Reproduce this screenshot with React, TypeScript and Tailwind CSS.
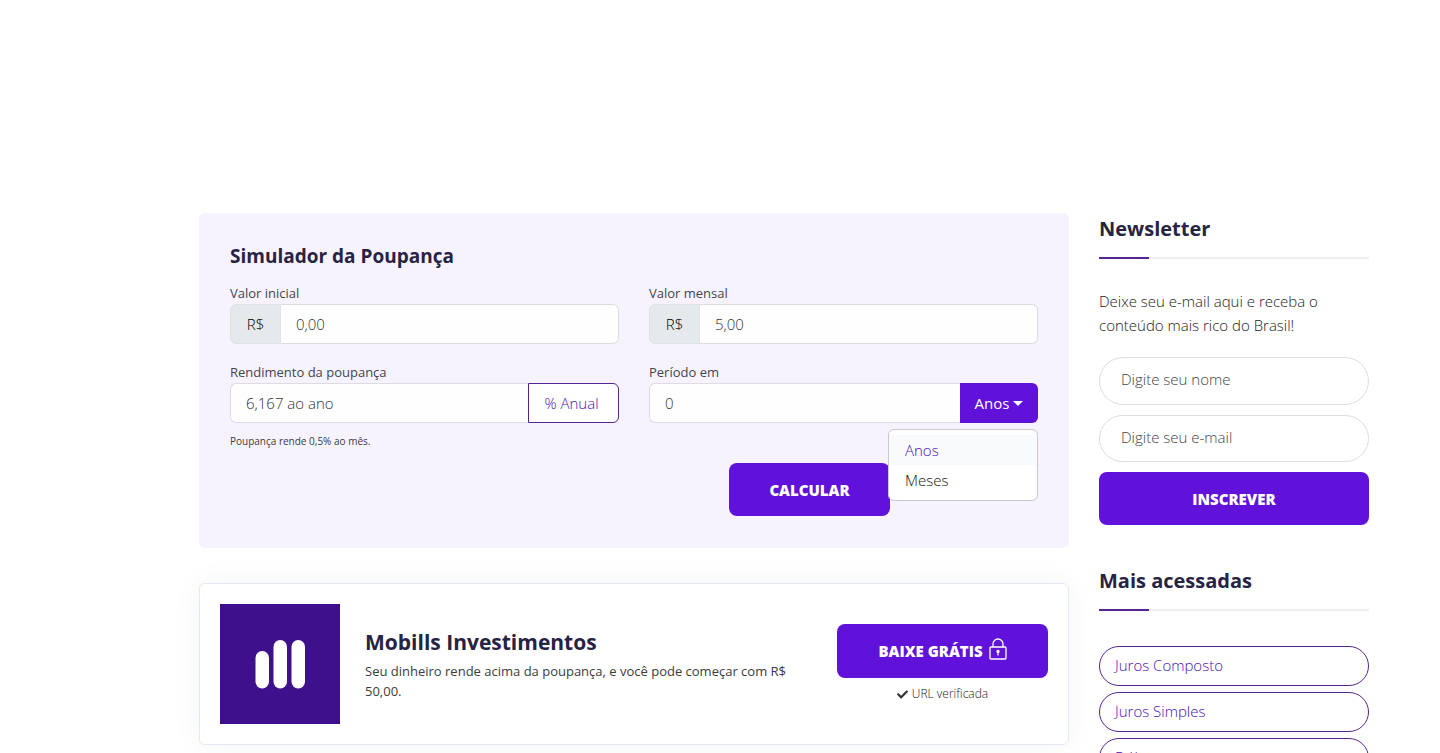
import { useState } from "react";

const periodos = ["Anos", "Meses"];

const maisAcessadas = [
  { nome: "Juros Composto", href: "#juros-composto" },
  { nome: "Juros Simples", href: "#juros-simples" },
  { nome: "Dólar", href: "#dolar" },
];

const labelClass = "block text-[13px] leading-[21px] text-[#45434f]";

const inputClass =
  "h-10 w-full min-w-0 border border-[#dcdce2] bg-[#fefefe] px-[15px] text-[15px] font-light text-[#333] placeholder:text-[#333] outline-none";

const newsletterInputClass =
  "rounded-full border border-[#dedee0] px-[21px] pb-1 text-[15px] font-light outline-none placeholder:text-[#444]";

const primaryButtonClass =
  "h-[53px] rounded-lg bg-[#6012db] pt-[2px] text-[15px] font-extrabold text-white";

function TituloSidebar({ children }: { children: string }) {
  return (
    <div className="border-b-2 border-[#eeeeef]">
      <h2 className="text-[20px] leading-8 font-bold text-[#272343]">{children}</h2>
      <div className="mt-3 -mb-[2px] h-[2px] w-[50px] bg-[#55268f]" />
    </div>
  );
}

function CampoValor({ id, label, placeholder }: { id: string; label: string; placeholder: string }) {
  return (
    <div>
      <label htmlFor={id} className={labelClass}>{label}</label>
      <div className="flex">
        <span className="flex h-10 w-[51px] shrink-0 items-center justify-center rounded-l-md border border-[#dfe3e6] bg-[#e6e9ec] text-[15px] font-light text-black">
          R$
        </span>
        <input id={id} className={`${inputClass} rounded-r-md border-l-0`} placeholder={placeholder} />
      </div>
    </div>
  );
}

export default function App() {
  const [periodo, setPeriodo] = useState("Anos");
  const [aberto, setAberto] = useState(true);

  return (
    <div className="grid grid-cols-[minmax(0,1fr)_270px] gap-[30px] bg-white pt-[213px] pr-[71px] pl-[199px] font-['Open_Sans',sans-serif]">
      <main>
        <form className="rounded-md bg-[#f6f3fe] px-[31px] pt-[31px] pb-8" onSubmit={(e) => e.preventDefault()}>
          <h2 className="text-[19px] leading-6 font-bold text-[#272343]">Simulador da Poupança</h2>
          <div className="mt-[15px] grid grid-cols-2 gap-x-[30px] gap-y-[18px]">
            <CampoValor id="inicial" label="Valor inicial" placeholder="0,00" />
            <CampoValor id="mensal" label="Valor mensal" placeholder="5,00" />
            <div>
              <label htmlFor="rendimento" className={labelClass}>Rendimento da poupança</label>
              <div className="flex">
                <input id="rendimento" className={`${inputClass} rounded-l-md border-r-0`} placeholder="6,167 ao ano" />
                <button type="button" className="h-10 w-[91px] shrink-0 rounded-r-md border border-[#55268f] bg-white pr-1 text-[15px] font-light text-[#4a0fb5]">
                  % Anual
                </button>
              </div>
              <p className="mt-[10px] text-[10px] leading-4 text-[#3c3a45]">Poupança rende 0,5% ao mês.</p>
            </div>
            <div>
              <label htmlFor="periodo" className={labelClass}>Período em</label>
              <div className="relative flex">
                <input id="periodo" className={`${inputClass} rounded-l-md border-r-0`} placeholder="0" />
                <button
                  type="button"
                  className="flex h-10 w-[78px] shrink-0 items-center justify-center gap-1 rounded-r-md bg-[#6012db] text-[15px] text-white"
                  onClick={() => setAberto(!aberto)}
                >
                  {periodo}
                  <span className="border-x-5 border-t-5 border-x-transparent border-t-white" />
                </button>
                {aberto && (
                  <div className="absolute top-[46px] right-0 w-[150px] rounded-md border border-[#c9c9ce] bg-white py-[5px]">
                    {periodos.map((p) => (
                      <button
                        key={p}
                        type="button"
                        className={`block h-[30px] w-full px-4 text-left text-[15px] font-light ${p === periodo ? "bg-[#f8fafb] text-[#4a0fb5]" : "text-[#111]"}`}
                        onClick={() => { setPeriodo(p); setAberto(false); }}
                      >
                        {p}
                      </button>
                    ))}
                  </div>
                )}
              </div>
              <button type="submit" className={`${primaryButtonClass} mt-10 ml-20 block w-[161px]`}>
                CALCULAR
              </button>
            </div>
          </div>
        </form>

        <section className="mt-[35px] flex items-center rounded-md border border-[#e3e8f2] bg-white p-5 shadow-[0_0_30px_rgba(40,60,90,0.05)]">
          <svg className="size-[120px] shrink-0" viewBox="0 0 120 120" role="img" aria-label="Mobills">
            <rect width="120" height="120" fill="#3f108c" />
            <g fill="#fff">
              <rect x="35.5" y="47" width="13.5" height="37.5" rx="6.7" />
              <rect x="53.5" y="36" width="13.5" height="48.5" rx="6.7" />
              <rect x="71.5" y="36" width="13.5" height="48.5" rx="6.7" />
            </g>
          </svg>
          <div className="ml-[25px] flex-1">
            <h2 className="mb-1 text-[21px] leading-[30px] font-bold text-[#272343]">Mobills Investimentos</h2>
            <p className="text-[13px] leading-5 text-[#3c3c3c]">
              Seu dinheiro rende acima da poupança, e você pode começar com R$ 50,00.
            </p>
          </div>
          <div className="ml-9 w-[211px] shrink-0 text-center">
            <a href="#baixar" className="flex h-[54px] items-center justify-center gap-[6px] rounded-lg bg-[#6012db] text-[15px] font-extrabold text-white">
              BAIXE GRÁTIS
              <svg className="-mt-1 h-[22px] w-[18px]" viewBox="0 0 18 22" fill="none" stroke="#fff" strokeWidth="1.3">
                <rect x="1" y="9" width="16" height="12" rx="1" />
                <path d="M4 9V6a5 5 0 0 1 10 0v3" />
                <circle cx="9" cy="13.5" r="1" fill="#fff" />
                <path d="M9 14v3.5" />
              </svg>
            </a>
            <p className="mt-[6px] flex items-center justify-center gap-1 text-[12px] leading-5 font-light text-[#1a1a1a]">
              <svg className="size-[11px]" viewBox="0 0 512 512" fill="#333">
                <path d="M173.9 439.4 7.5 273c-10-10-10-26.200 0-36.200l36.200-36.200c10-10 26.200-10 36.200 0L192 312.700 432.100 72.600c10-10 26.200-10 36.200 0l36.200 36.200c10 10 10 26.200 0 36.200L210.100 439.400c-10 10-26.200 10-36.200 0z" />
              </svg>
              URL verificada
            </p>
          </div>
        </section>
      </main>

      <aside>
        <TituloSidebar>Newsletter</TituloSidebar>
        <p className="mt-[30px] text-[15px] leading-6 font-light text-[#1a1a1a]">
          Deixe seu e-mail aqui e receba o conteúdo mais rico do Brasil!
        </p>
        <form className="mt-5 mb-10 flex flex-col gap-[10px]" onSubmit={(e) => e.preventDefault()}>
          <input aria-label="Nome" className={`${newsletterInputClass} h-12`} placeholder="Digite seu nome" />
          <input aria-label="E-mail" type="email" className={`${newsletterInputClass} h-[47px]`} placeholder="Digite seu e-mail" />
          <button type="submit" className={primaryButtonClass}>INSCREVER</button>
        </form>
        <TituloSidebar>Mais acessadas</TituloSidebar>
        <nav className="mt-[35px] flex flex-col gap-[6px]">
          {maisAcessadas.map((link) => (
            <a
              key={link.nome}
              href={link.href}
              className="flex h-10 items-center rounded-full border border-[#55268f] px-[15px] pb-[2px] text-[15px] font-light text-[#4a0fb5]"
            >
              {link.nome}
            </a>
          ))}
        </nav>
      </aside>
    </div>
  );
}
